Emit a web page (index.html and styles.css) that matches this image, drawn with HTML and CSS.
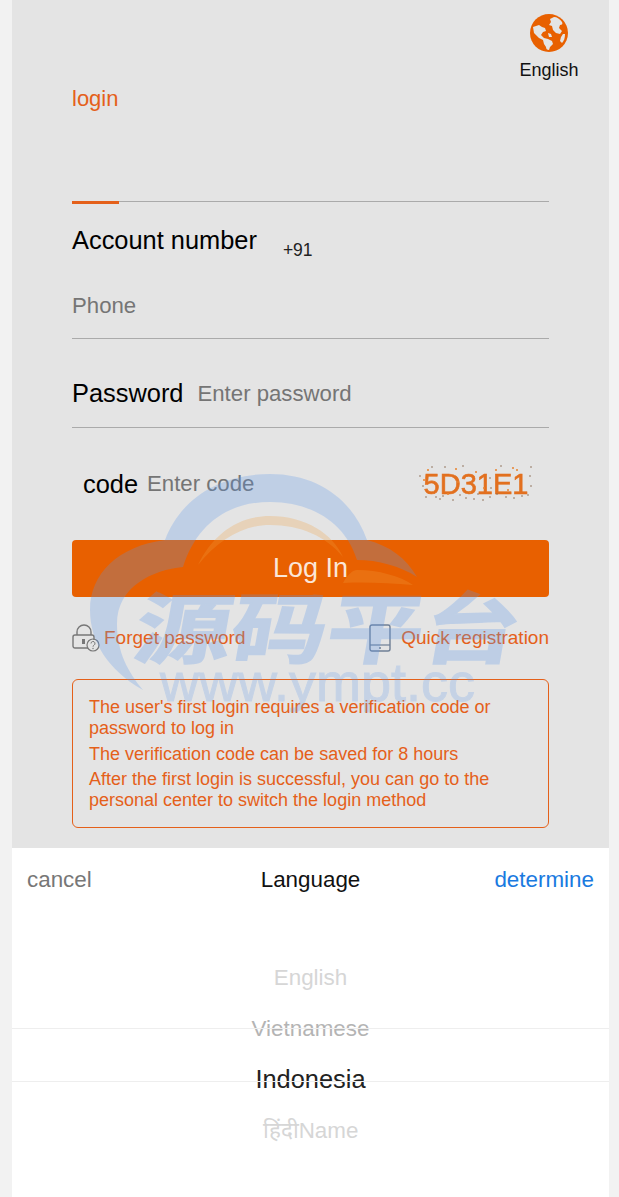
FILE: index.html
```html
<!DOCTYPE html>
<html lang="en">
<head>
    <meta charset="UTF-8">
    <meta name="viewport" content="width=device-width, initial-scale=1.0">
    <title>login</title>
    <link rel="stylesheet" href="styles.css">
</head>
<body>
    <div class="app">
        <div class="login">
            <div class="lang">
                <svg class="globe" viewBox="0 0 38 38">
                    <circle cx="19" cy="19" r="19" fill="#e86000"/>
                    <path fill="#e4e4e4" d="M24 3c3 0 6 2 8 5 1 2 0 3-2 3l-1 3 3 3-2 3-4-1-3-3-1-4-3-1 2-3-1-3z"/>
                    <path fill="#e4e4e4" d="M3 13l6-2 3 2 3 1 1 3-3 1-2 3 3 3 4 1 4 2 1 3-3 3-1 3c-2 0-3-1-3-3l-2-3-1-4-4-2-5-5z"/>
                    <path fill="#e4e4e4" d="M18 19l3 1 1 3-3 0z"/>
                    <path fill="#e4e4e4" d="M33 20l2 0c0 4-1 7-3 9l-2-2 1-4z"/>
                </svg>
                <span>English</span>
            </div>

            <div class="form">
                <div class="tab">login</div>
                <div class="tab-line"></div>

                <div class="account">
                    <span class="label">Account number</span>
                    <span class="prefix">+91</span>
                </div>
                <div class="field phone">
                    <input type="text" placeholder="Phone">
                </div>
                <div class="field password">
                    <span class="label">Password</span>
                    <input type="password" placeholder="Enter password">
                </div>
                <div class="field code">
                    <span class="label">code</span>
                    <input type="text" placeholder="Enter code">
                    <div class="captcha">
                        <svg class="specks" viewBox="0 0 116 40">
                            <g fill="#8a6a50">
                                <circle cx="2" cy="12" r=".8"/><circle cx="5" cy="22" r=".8"/><circle cx="8" cy="33" r=".8"/>
                                <circle cx="14" cy="3" r=".8"/><circle cx="27" cy="3" r=".8"/><circle cx="22" cy="35" r=".8"/>
                                <circle cx="25" cy="32" r=".8"/><circle cx="35" cy="36" r=".8"/><circle cx="45" cy="2" r=".8"/>
                                <circle cx="48" cy="34" r=".8"/><circle cx="60" cy="30" r=".8"/><circle cx="65" cy="36" r=".8"/>
                                <circle cx="72" cy="14" r=".8"/><circle cx="73" cy="24" r=".8"/><circle cx="72" cy="33" r=".8"/>
                                <circle cx="83" cy="2" r=".8"/><circle cx="88" cy="33" r=".8"/><circle cx="96" cy="34" r=".8"/>
                                <circle cx="104" cy="32" r=".8"/><circle cx="112" cy="12" r=".8"/><circle cx="113" cy="22" r=".8"/>
                                <circle cx="110" cy="31" r=".8"/><circle cx="113" cy="3" r=".8"/><circle cx="18" cy="33" r=".8"/>
                                <circle cx="42" cy="31" r=".8"/><circle cx="56" cy="35" r=".8"/><circle cx="79" cy="30" r=".8"/>
                            </g>
                            <g fill="#e8832f">
                                <circle cx="10" cy="6" r="1"/><circle cx="38" cy="5" r="1"/><circle cx="58" cy="8" r="1"/>
                                <circle cx="78" cy="6" r="1"/><circle cx="95" cy="4" r="1"/><circle cx="99" cy="6" r="1"/>
                                <circle cx="40" cy="18" r="1"/><circle cx="52" cy="28" r="1"/><circle cx="66" cy="24" r="1"/>
                                <circle cx="30" cy="30" r="1"/><circle cx="90" cy="26" r="1"/><circle cx="6" cy="16" r="1"/>
                            </g>
                        </svg>
                        <span>5D31E1</span>
                    </div>
                </div>

                <button class="submit" type="button">Log In</button>

                <div class="links">
                    <a class="link">
                        <svg class="link-icon" width="28" height="28" viewBox="0 0 28 28">
                            <path d="M5 11V8a7 7 0 0 1 14 0v3" fill="none" stroke="#777" stroke-width="1.400"/>
                            <path d="M16 24H3a2 2 0 0 1-2-2V13a2 2 0 0 1 2-2h17a2 2 0 0 1 2 2v3" fill="none" stroke="#777" stroke-width="1.400"/>
                            <rect x="10" y="15" width="3" height="5" fill="#777"/>
                            <circle cx="21" cy="21" r="6" fill="none" stroke="#777" stroke-width="1.200"/>
                            <path d="M19 19.500a2 2 0 1 1 3 1.700c-.7.500-1 .8-1 1.500" fill="none" stroke="#777" stroke-width="1"/>
                            <circle cx="21" cy="24.500" r=".7" fill="#777"/>
                        </svg>
                        Forget password
                    </a>
                    <a class="link">
                        <svg class="link-icon" width="22" height="28" viewBox="0 0 22 28">
                            <rect x="1" y="1" width="20" height="26" rx="2" fill="none" stroke="#6f7f95" stroke-width="1.400"/>
                            <path d="M1 21h20" stroke="#6f7f95" stroke-width="1.200"/>
                            <circle cx="11" cy="24" r="1" fill="#6f7f95"/>
                        </svg>
                        Quick registration
                    </a>
                </div>

                <div class="notice">
                    <p>The user's first login requires a verification code or password to log in</p>
                    <p>The verification code can be saved for 8 hours</p>
                    <p>After the first login is successful, you can go to the personal center to switch the login method</p>
                </div>
            </div>

            <div class="watermark">
                <svg class="cloud" viewBox="0 0 340 240">
                    <path fill="#5a96eb" d="M65 216C30 196 12 168 12 136 12 100 40 72 87 66 102 26 140 0 192 0c48 0 83 26 97 66 23 6 39 18 50 37-17-11-39-17-60-17-11-36-44-58-87-58-44 0-74 24-87 65-30 3-66 19-66 57 0 28 11 48 26 66z"/>
                    <path fill="#f0a040" d="M120 91c15-31 40-49 72-49 36 0 63 18 73 41-17-21-43-32-73-32-27 0-52 15-72 40z"/>
                    <path fill="#f0a040" d="M265 109c5-9 10-13 14-13 21 0 43 6 56 15-23-2-47-3-70-2z"/>
                </svg>
                <div class="wm-title">源码平台</div>
                <div class="wm-url">www.ympt.cc</div>
            </div>
        </div>

        <div class="picker">
            <div class="picker-head">
                <span class="cancel">cancel</span>
                <span class="picker-title">Language</span>
                <span class="confirm">determine</span>
            </div>
            <ul class="options">
                <li class="far">English</li>
                <li class="near">Vietnamese</li>
                <li class="current">Indonesia</li>
                <li class="far">हिंदीName</li>
            </ul>
            <div class="indicator"></div>
        </div>
    </div>
</body>
</html>
```

FILE: styles.css
```css
* {
    box-sizing: border-box;
}
body {
    margin: 0;
    padding: 0 10px 0 12px;
    background: #f2f2f2;
    font-family: "Liberation Sans", "Noto Sans CJK SC", Arial, sans-serif;
}
.app {
    height: 1197px;
    overflow: hidden;
    background: #fff;
}
.login {
    position: relative;
    height: 848px;
    padding-top: 14px;
    background: #e4e4e4;
}
.lang {
    display: flex;
    flex-direction: column;
    align-items: center;
    width: 58px;
    margin-left: auto;
    margin-right: 31px;
    font-size: 18px;
    line-height: 20px;
    color: #111;
}
.globe {
    width: 38px;
    height: 38px;
    margin-bottom: 8px;
}
.form {
    padding: 0 60px;
}
.tab {
    margin-top: 6px;
    font-size: 22px;
    line-height: 26px;
    color: #e4601a;
}
.tab-line {
    position: relative;
    height: 1px;
    margin-top: 89px;
    background: #aaa;
}
.tab-line::after {
    content: "";
    position: absolute;
    left: 0;
    top: 0;
    width: 47px;
    height: 3px;
    background: #e4601a;
}
.account {
    display: flex;
    height: 56px;
    padding-top: 23px;
}
.label {
    font-size: 25.400px;
    line-height: 30px;
    color: #000;
    white-space: nowrap;
}
.prefix {
    margin: 13px 0 0 26px;
    font-size: 17.500px;
    line-height: 24px;
    color: #222;
}
.field {
    display: flex;
    align-items: center;
    border-bottom: 1px solid #aaa;
}
.field input {
    flex: 1;
    min-width: 0;
    padding: 0;
    border: 0;
    outline: 0;
    background: transparent;
    font: inherit;
    font-size: 22.200px;
}
.phone {
    height: 81px;
    padding-top: 16px;
}
.password {
    height: 89px;
    padding-top: 21px;
}
.password .label {
    margin: 0 14px 2px 0;
}
.code {
    height: 84px;
    padding: 28px 0 0 11px;
    border-bottom: 0;
}
.code .label {
    margin-right: 9px;
}
.captcha {
    position: relative;
    display: flex;
    justify-content: center;
    align-items: center;
    width: 116px;
    height: 40px;
    margin-right: 15px;
    font-size: 29px;
    color: #e2701f;
    -webkit-text-stroke: .6px #e2701f;
    filter: blur(.4px);
}
.specks {
    position: absolute;
    left: 0;
    top: 0;
    width: 116px;
    height: 40px;
}
.submit {
    display: block;
    width: 100%;
    height: 57px;
    margin-top: 28px;
    border: 0;
    border-radius: 4px;
    background: #e86000;
    color: #fbe6d8;
    font: inherit;
    font-size: 27px;
}
.links {
    display: flex;
    justify-content: space-between;
    margin-top: 27px;
}
.link {
    display: flex;
    align-items: center;
    font-size: 19px;
    line-height: 28px;
    color: #e4601a;
}
.link-icon {
    margin-right: 4px;
}
.link:last-child .link-icon {
    margin-right: 10px;
}
.notice {
    height: 149px;
    margin-top: 27px;
    padding: 17px 16px 0;
    border: 1px solid #e4601a;
    border-radius: 6px;
    font-size: 18px;
    line-height: 21px;
    color: #e4601a;
}
.notice p {
    margin: 0 0 4.600px;
}
.watermark {
    position: absolute;
    left: 66px;
    top: 474px;
    width: 450px;
    height: 240px;
    pointer-events: none;
    color: #5a96eb;
}
.cloud {
    position: absolute;
    left: 0;
    top: 0;
    width: 340px;
    height: 240px;
    opacity: .26;
}
.wm-title {
    position: absolute;
    left: 58px;
    top: 107px;
    width: 400px;
    font-size: 96px;
    line-height: 100px;
    font-weight: bold;
    white-space: nowrap;
    opacity: .27;
    -webkit-text-stroke: 2px #5a96eb;
    transform: skewX(-10deg) scaleY(.8);
}
.wm-url {
    position: absolute;
    left: 82px;
    top: 178px;
    font-size: 54px;
    line-height: 60px;
    white-space: nowrap;
    opacity: .22;
    -webkit-text-stroke: 1px #5a96eb;
}
.picker {
    position: relative;
    height: 349px;
    background: #fff;
}
.picker-head {
    display: grid;
    grid-template-columns: 1fr auto 1fr;
    padding: 19px 15px 0;
    font-size: 22.400px;
    line-height: 26px;
}
.cancel {
    color: #777;
}
.picker-title {
    color: #111;
}
.confirm {
    text-align: right;
    color: #1a7ae0;
}
.options {
    margin: 0;
    padding: 59px 0 0;
    list-style: none;
    text-align: center;
    font-size: 22.400px;
    line-height: 51px;
}
.far {
    color: #d6d6d6;
}
.near {
    color: #b4b4b4;
}
.current {
    font-size: 25.400px;
    color: #222;
}
.indicator {
    position: absolute;
    left: 0;
    right: 0;
    top: 180px;
    height: 54px;
    border-top: 1px solid #eee;
    border-bottom: 1px solid #eee;
    pointer-events: none;
}
```
